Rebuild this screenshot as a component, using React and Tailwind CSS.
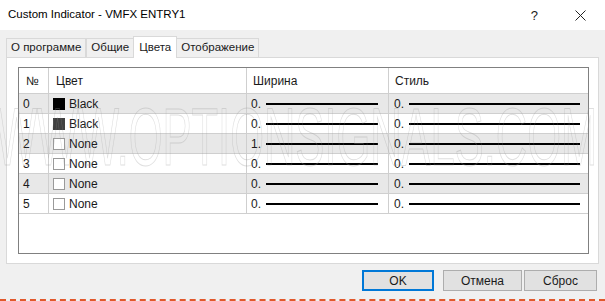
import React from "react";

const rows = [
	{ n: "0", swatch: "bg-black border-black", name: "Black", w: "0.", s: "0." },
	{ n: "1", swatch: "bg-[#404040] border-[#404040]", name: "Black", w: "0.", s: "0." },
	{ n: "2", swatch: "bg-white border-[#9a9a9a]", name: "None", w: "1.", s: "0." },
	{ n: "3", swatch: "bg-white border-[#9a9a9a]", name: "None", w: "0.", s: "0." },
	{ n: "4", swatch: "bg-white border-[#9a9a9a]", name: "None", w: "0.", s: "0." },
	{ n: "5", swatch: "bg-white border-[#9a9a9a]", name: "None", w: "0.", s: "0." },
];

const tabs = ["О программе", "Общие", "Цвета", "Отображение"];

function Tab({ label, active }) {
	if (active) {
		return (
			<div className="relative z-10 -mb-px h-[22px] px-[5px] flex items-center bg-white border border-b-0 border-[#d9d9d9] -mx-px">
				{label}
			</div>
		);
	}
	return (
		<div className="h-[19px] px-[4px] flex items-center bg-[#f0f0f0] border border-b-0 border-[#d9d9d9]">
			{label}
		</div>
	);
}

function Row({ row, index }) {
	const bg = index % 2 === 0 ? "bg-[#e8e8e8]" : "bg-white";
	return (
		<div className={`flex h-[20px] border-b border-[#cfcfcf] ${bg}`}>
			<div className="w-[30px] pl-[4px] flex items-center border-r border-[#cfcfcf]">
				{row.n}
			</div>
			<div className="w-[198px] pl-[4px] flex items-center gap-[4px] border-r border-[#cfcfcf]">
				<span className={`w-[12px] h-[12px] border ${row.swatch}`} />
				<span>{row.name}</span>
			</div>
			<div className="w-[142px] pl-[4px] pr-[10px] flex items-center gap-[5px] border-r border-[#cfcfcf]">
				<span>{row.w}</span>
				<span className="flex-1 h-[2px] bg-black" />
			</div>
			<div className="flex-1 pl-[5px] pr-[8px] flex items-center gap-[5px]">
				<span>{row.s}</span>
				<span className="flex-1 h-[2px] bg-black" />
			</div>
		</div>
	);
}

export default function App() {
	return (
		<div className="relative w-[605px] h-[301px] overflow-hidden bg-[#f0f0f0] text-[12px] text-[#1a1a1a] font-['Liberation_Sans',Arial,sans-serif] leading-none">
			{/* title bar */}
			<div className="h-[30px] bg-white flex items-center pl-[8px]">
				<span className="text-[11.5px] text-black">Custom Indicator - VMFX ENTRY1</span>
				<span className="ml-auto mr-[37px] text-[13px]">?</span>
				<svg width="11" height="11" viewBox="0 0 11 11" className="mr-[19px]">
					<path d="M0.5 0.5 L10.5 10.5 M10.5 0.5 L0.5 10.5" stroke="#222" strokeWidth="1" />
				</svg>
			</div>

			{/* tabs */}
			<div className="flex items-end pl-[6px] pt-[6px] text-[11.5px]">
				{tabs.map((t) => (
					<Tab key={t} label={t} active={t === "Цвета"} />
				))}
			</div>

			{/* panel */}
			<div className="ml-[6px] w-[593px] h-[207px] bg-white border border-[#d9d9d9] pl-[11px] pt-[9px]">
				<div className="w-[571px] h-[187px] border border-[#808080] bg-white">
					<div className="flex h-[26px] border-b border-[#cfcfcf]">
						<div className="w-[30px] pl-[7px] flex items-center border-r border-[#cfcfcf]">№</div>
						<div className="w-[198px] pl-[7px] flex items-center border-r border-[#cfcfcf]">Цвет</div>
						<div className="w-[142px] pl-[6px] flex items-center border-r border-[#cfcfcf]">Ширина</div>
						<div className="flex-1 pl-[6px] flex items-center">Стиль</div>
					</div>
					{rows.map((r, i) => (
						<Row key={r.n} row={r} index={i} />
					))}
				</div>
			</div>

			{/* buttons */}
			<div className="flex justify-end pr-[8px] pt-[6px]">
				<button className="w-[72px] h-[21px] bg-[#e1e1e1] border-2 border-[#0078d7] mr-[9px]">OK</button>
				<button className="w-[79px] h-[21px] bg-[#e1e1e1] border border-[#adadad] mr-[2px]">Отмена</button>
				<button className="w-[73px] h-[21px] bg-[#e1e1e1] border border-[#adadad]">Сброс</button>
			</div>

			{/* bottom edge */}
			<div className="absolute left-0 right-0 bottom-0 h-[2px] border-b-2 border-dashed border-[#e2582c]" />

			{/* watermark */}
			<div className="absolute left-[-4px] top-[96px] pointer-events-none text-[82px] leading-none font-['Liberation_Sans',sans-serif] text-transparent [-webkit-text-stroke:1px_rgba(150,150,150,0.3)] scale-x-[0.53] origin-left whitespace-nowrap">
				WWW.OPTIONSIGNALS.COM
			</div>
		</div>
	);
}
